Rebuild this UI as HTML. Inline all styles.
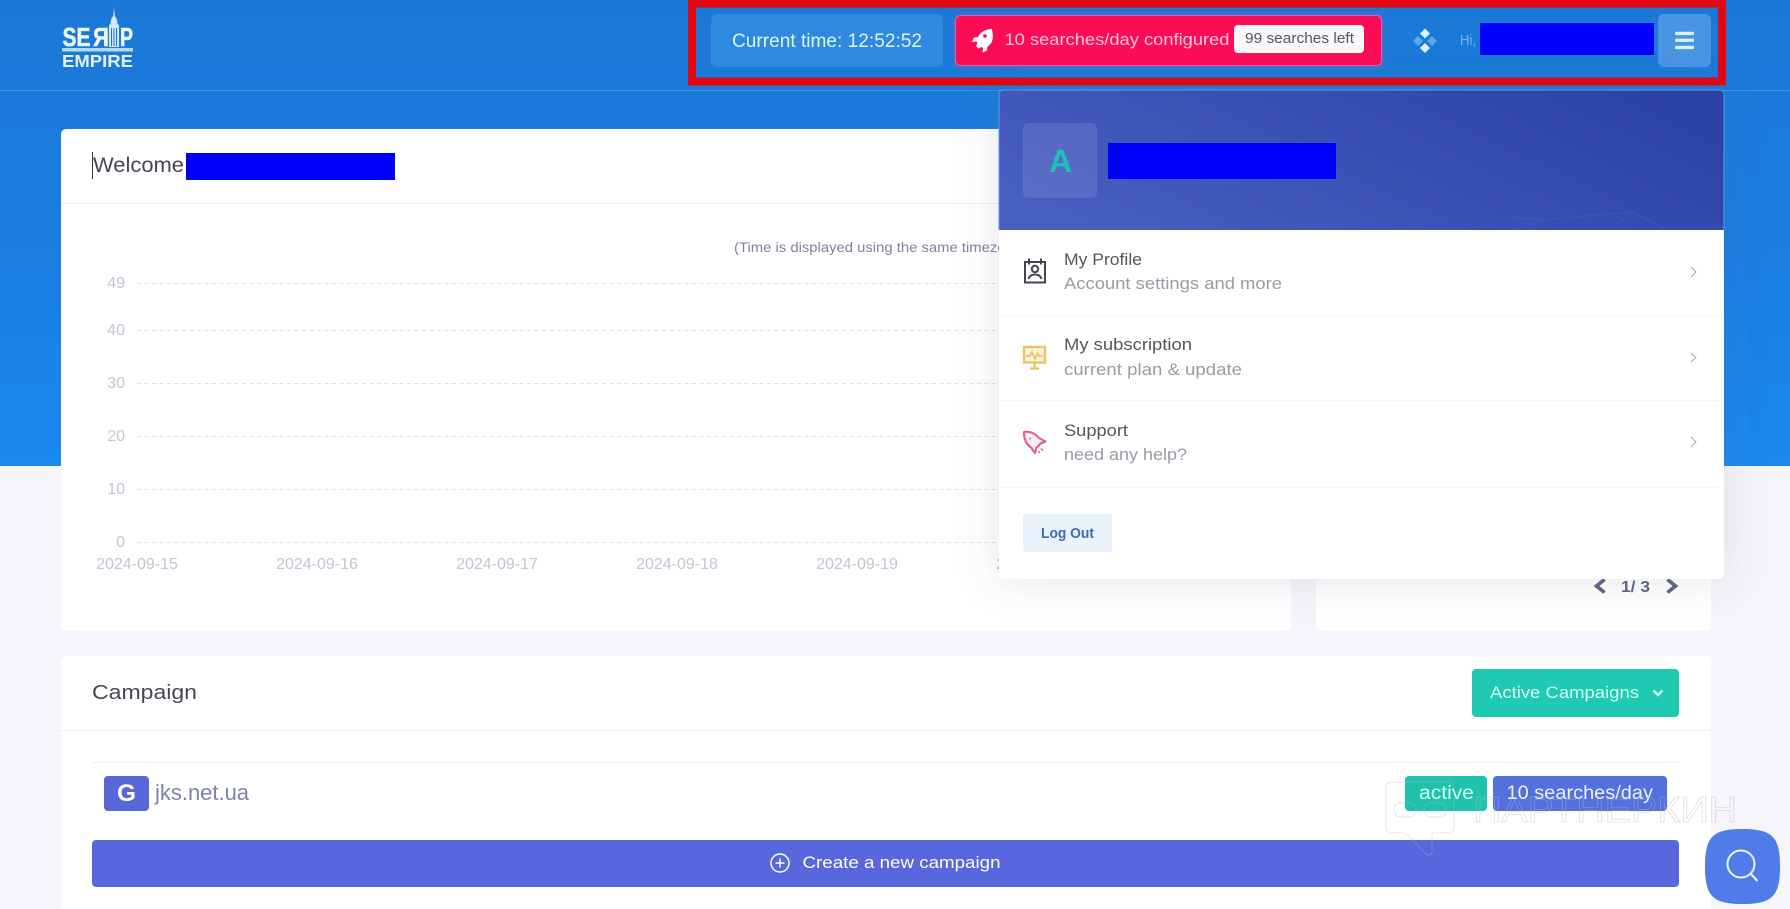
<!DOCTYPE html>
<html lang="en">
<head>
<meta charset="utf-8">
<title>SERP Empire</title>
<style>
html,body{margin:0;padding:0;width:1790px;height:909px;overflow:hidden;background:#f5f5fb}
svg{display:block;position:absolute;left:0;top:0}
text{font-family:"Liberation Sans",Arial,sans-serif}
</style>
</head>
<body>
<svg xmlns="http://www.w3.org/2000/svg" width="1790" height="909" viewBox="0 0 1790 909">
<defs>
<linearGradient id="hero" x1="0" y1="0" x2="0" y2="1">
<stop offset="0" stop-color="#1b78d6"/><stop offset=".5" stop-color="#1a7edf"/><stop offset="1" stop-color="#1a88f0"/>
</linearGradient>
<linearGradient id="head" x1="0" y1=".7" x2="1" y2=".3">
<stop offset="0" stop-color="#495ec1"/><stop offset="1" stop-color="#2d42a7"/>
</linearGradient>
<filter id="ddshadow" x="-10%" y="-10%" width="120%" height="125%">
<feDropShadow dx="0" dy="0" stdDeviation="22" flood-color="#52567a" flood-opacity=".16"/>
</filter>
<filter id="glow" x="-10%" y="-30%" width="120%" height="160%">
<feDropShadow dx="0" dy="0" stdDeviation="3" flood-color="#a05ad0" flood-opacity=".6"/>
</filter>
</defs>

<!-- backgrounds -->
<rect width="1790" height="909" fill="#f5f5fb"/>
<rect width="1790" height="466" fill="url(#hero)"/>
<rect x="0" y="90" width="1790" height="1" fill="#3f93e6"/>

<!-- logo -->
<path d="M114 7l.8 9 2 3 .7 5 1.500 1v22h-10V25l1.500-1 .7-5 2-3z" fill="#d4e5f5"/>
<g stroke="#1b78d6" stroke-width="1"><path d="M111.500 28v18M114 28v18M116.500 28v18"/></g>
<g fill="#eef7fd" stroke="#eef7fd" stroke-width=".5">
<text x="62.500" y="46" font-size="26" font-weight="bold" textLength="28" lengthAdjust="spacingAndGlyphs">SE</text>
<text x="93" y="46" font-size="26" font-weight="bold" textLength="16" lengthAdjust="spacingAndGlyphs">Я</text>
<text x="120" y="46" font-size="26" font-weight="bold" textLength="13" lengthAdjust="spacingAndGlyphs">P</text>
</g>
<rect x="62" y="48" width="71" height="3.500" fill="#b9d6f1"/>
<text x="62" y="67" font-size="17.500" font-weight="bold" fill="#e4f1fb" textLength="71" lengthAdjust="spacingAndGlyphs">EMPIRE</text>

<!-- red box -->
<rect x="692" y="3.500" width="1030" height="78" fill="none" stroke="#e30613" stroke-width="8"/>

<!-- time -->
<rect x="711" y="14" width="232" height="53" rx="6" fill="#2f89df"/>
<text x="732" y="47" font-size="19" fill="#dcf5fb" textLength="190" lengthAdjust="spacingAndGlyphs">Current time: 12:52:52</text>

<!-- pink -->
<rect x="955.500" y="15.500" width="426" height="50" rx="5" fill="#fb0a57" stroke="#e060a0" stroke-width="1" filter="url(#glow)"/>
<path d="M992 29c-6 0-11 2.500-14 8l-4 .5-2 4.500 4.500-.5 1 1.500-1.500 3 2.500 2.500 3-1.500 1.500 1-.5 4.500 4.500-2 .5-4c5-3 6.500-8.500 4.500-17z" fill="#fff"/>
<circle cx="985" cy="36" r="1.800" fill="#fb0a57"/>
<text x="1004.500" y="45" font-size="17" fill="#fcc4db" textLength="225" lengthAdjust="spacingAndGlyphs">10 searches/day configured</text>
<rect x="1234" y="25" width="130" height="28" rx="4" fill="#f9f9fb"/>
<text x="1245" y="43" font-size="14.500" fill="#565661" textLength="109" lengthAdjust="spacingAndGlyphs">99 searches left</text>

<!-- diamonds -->
<path d="M1425 28.500l5 5-5 5-5-5zM1425 43l5 5-5 5-5-5z" fill="#d9f2ff"/>
<path d="M1418 36l5 5-5 5-5-5zM1432 36l5 5-5 5-5-5z" fill="#5fa6ea"/>
<text x="1460" y="45" font-size="15" fill="#79b6f0" textLength="16" lengthAdjust="spacingAndGlyphs">Hi,</text>
<rect x="1480" y="23" width="174" height="32" fill="#0000ff"/>

<!-- menu btn -->
<rect x="1658" y="14" width="53" height="53" rx="6" fill="#4a95e3"/>
<g fill="#d4f3fb"><rect x="1675" y="31.800" width="19" height="3.300" rx="1"/><rect x="1675" y="38.600" width="19" height="3.300" rx="1"/><rect x="1675" y="45.800" width="19" height="3.300" rx="1"/></g>

<!-- welcome card -->
<rect x="61" y="129" width="1230" height="502" rx="5" fill="#fff"/>
<rect x="92" y="152" width="1" height="27" fill="#333"/>
<text x="93" y="172" font-size="21" fill="#464652" textLength="91" lengthAdjust="spacingAndGlyphs">Welcome</text>
<rect x="186" y="153" width="209" height="27" fill="#0000ff"/>
<rect x="61" y="203" width="1230" height="1" fill="#eeeef3"/>
<text x="734" y="252" font-size="13.500" fill="#7e8299" textLength="293" lengthAdjust="spacingAndGlyphs">(Time is displayed using the same timezone)</text>

<!-- chart -->
<g stroke="#dcdde6" stroke-width="1" stroke-dasharray="4 3.500">
<path d="M137 283.500H1260M137 330.500H1260M137 383.500H1260M137 436.500H1260M137 489.500H1260M137 542.500H1260"/>
</g>
<g font-size="16" fill="#c3c4d4" text-anchor="end">
<text x="125" y="288">49</text><text x="125" y="335">40</text><text x="125" y="388">30</text><text x="125" y="441">20</text><text x="125" y="494">10</text><text x="125" y="547">0</text>
</g>
<g font-size="16" fill="#c3c4d4" text-anchor="middle">
<text x="137" y="569">2024-09-15</text><text x="317" y="569">2024-09-16</text><text x="497" y="569">2024-09-17</text><text x="677" y="569">2024-09-18</text><text x="857" y="569">2024-09-19</text><text x="1037" y="569">2024-09-20</text>
</g>

<!-- side card -->
<rect x="1316" y="129" width="395" height="502" rx="5" fill="#fff"/>
<path d="M1604.500 579.500l-8 6.500 8 6.500" fill="none" stroke="#5c6486" stroke-width="3.600"/>
<path d="M1667.500 579.500l8 6.500-8 6.500" fill="none" stroke="#5c6486" stroke-width="3.600"/>
<text x="1621" y="592" font-size="16" font-weight="bold" fill="#5c6486" textLength="29" lengthAdjust="spacingAndGlyphs">1/ 3</text>

<!-- campaign card -->
<rect x="61" y="656" width="1650" height="260" rx="5" fill="#fff"/>
<text x="92" y="699" font-size="20.500" fill="#464652" textLength="105" lengthAdjust="spacingAndGlyphs">Campaign</text>
<rect x="61" y="730" width="1650" height="1" fill="#eeeef3"/>
<rect x="92" y="762" width="1588" height="1" fill="#eeeef3"/>
<rect x="1472" y="669" width="207" height="48" rx="4" fill="#1fc9b2"/>
<text x="1490" y="698" font-size="17" fill="#d6fff6" textLength="149" lengthAdjust="spacingAndGlyphs">Active Campaigns</text>
<path d="M1653.500 690.500l4.500 4.500 4.500-4.500" fill="none" stroke="#d6fff6" stroke-width="2.400"/>

<rect x="104" y="776" width="45" height="35" rx="4" fill="#5766d9"/>
<text x="117" y="801" font-size="24" font-weight="bold" fill="#fff" textLength="19" lengthAdjust="spacingAndGlyphs">G</text>
<text x="155" y="800" font-size="22.500" fill="#7f83ab" textLength="94" lengthAdjust="spacingAndGlyphs">jks.net.ua</text>

<rect x="1405" y="776" width="82" height="35" rx="4" fill="#1fc2ac"/>
<text x="1419" y="799" font-size="19" fill="#d6fff6" textLength="55" lengthAdjust="spacingAndGlyphs">active</text>
<rect x="1493" y="776" width="174" height="35" rx="4" fill="#5270de"/>
<text x="1506.500" y="799" font-size="19" fill="#eef2ff" textLength="146.500" lengthAdjust="spacingAndGlyphs">10 searches/day</text>

<rect x="92" y="840" width="1587" height="47" rx="4" fill="#5867dd"/>
<circle cx="780" cy="863" r="9" fill="none" stroke="#fff" stroke-width="1.500"/>
<path d="M780 858.500v9M775.500 863h9" stroke="#fff" stroke-width="1.500"/>
<text x="802.500" y="868" font-size="17" fill="#fff" textLength="198" lengthAdjust="spacingAndGlyphs">Create a new campaign</text>

<!-- dropdown -->
<rect x="999" y="90" width="725" height="489" rx="5" fill="#fff" filter="url(#ddshadow)"/>
<path d="M999 230V94a4 4 0 0 1 4-4h717a4 4 0 0 1 4 4v136z" fill="url(#head)"/>
<path d="M999 230V94a4 4 0 0 1 4-4h717a4 4 0 0 1 4 4v136" fill="none" stroke="#5b9be8" stroke-width="1"/>
<g stroke="#4d72cc" stroke-width="1" fill="none" opacity=".3">
<path d="M1515 230l25-10 92-8 35 18M1632 212l-22 18M1540 220l-30-3"/>
</g>
<rect x="1023" y="123" width="74" height="75" rx="5" fill="#fff" fill-opacity=".1"/>
<text x="1049" y="172" font-size="32" font-weight="bold" fill="#1bc0b8">A</text>
<rect x="1108" y="143" width="228" height="36" fill="#0000ff"/>

<!-- items -->
<text x="1064" y="265" font-size="16.500" fill="#55555f" textLength="78" lengthAdjust="spacingAndGlyphs">My Profile</text>
<text x="1064" y="289" font-size="16.500" fill="#9a9aa6" textLength="218" lengthAdjust="spacingAndGlyphs">Account settings and more</text>
<rect x="999" y="315" width="725" height="1" fill="#f6f6f9"/>
<text x="1064" y="350" font-size="16.500" fill="#55555f" textLength="128" lengthAdjust="spacingAndGlyphs">My subscription</text>
<text x="1064" y="375" font-size="16.500" fill="#9a9aa6" textLength="178" lengthAdjust="spacingAndGlyphs">current plan &amp; update</text>
<rect x="999" y="400" width="725" height="1" fill="#f6f6f9"/>
<text x="1064" y="436" font-size="16.500" fill="#55555f" textLength="64" lengthAdjust="spacingAndGlyphs">Support</text>
<text x="1064" y="460" font-size="16.500" fill="#9a9aa6" textLength="123" lengthAdjust="spacingAndGlyphs">need any help?</text>
<rect x="999" y="487" width="725" height="1" fill="#f6f6f9"/>

<g fill="none" stroke="#999aa3" stroke-width=".9">
<path d="M1691 267l5 5-5 5M1691 353l5 4.500-5 4.500M1691 437l5 5-5 5"/>
</g>

<!-- profile icon -->
<g fill="none" stroke="#45454f" stroke-width="2">
<rect x="1025" y="262" width="20" height="20.500"/>
<path d="M1029 258.500v6M1041 258.500v6"/>
<circle cx="1035" cy="269" r="3.200"/>
<path d="M1028.500 279c1-3.500 4-4.500 6.500-4.500s5.500 1 6.500 4.500"/>
</g>
<!-- monitor icon -->
<g fill="none" stroke="#e8c468" stroke-width="2.400">
<rect x="1024" y="347" width="21" height="15.500" fill="#fbf2d8"/>
<path d="M1026 356h4l2-4 3 7 2.500-6 1.500 3h4" stroke-width="1.800"/>
<path d="M1034.500 363v5M1030 368.500h9"/>
</g>
<!-- rocket icon -->
<g fill="#fdeef3" stroke="#d8608c" stroke-width="2.100" stroke-linejoin="round">
<path d="M1024 432c6-1 11.500 1.500 15 6l6.500 3.500-5 2c-1 1.500-2.500 3-4 4l-1.500 5.500-4-5.500c-4.500-3-7-8.500-7-15.500z"/>
<circle cx="1030" cy="438.500" r="1" fill="#d8608c" stroke="none"/>
<path d="M1041 448.500l2 2M1038.500 451l1 2" fill="none" stroke-width="1.500"/>
</g>

<!-- log out -->
<rect x="1023" y="514" width="89" height="38" rx="3" fill="#e9f1fc"/>
<text x="1041" y="538" font-size="14.500" font-weight="bold" fill="#3f6cae" textLength="53" lengthAdjust="spacingAndGlyphs">Log Out</text>

<!-- watermark -->
<g fill="none" stroke="#b9b9bf" stroke-width=".7" opacity=".5">
<path d="M1391 782h58a5 5 0 0 1 5 5v41a5 5 0 0 1-5 5h-17v18c0 5-4 5-7 2l-19-20h-15a5 5 0 0 1-5-5v-41a5 5 0 0 1 5-5z"/>
<rect x="1394" y="803" width="22" height="14" rx="6"/><rect x="1424" y="803" width="22" height="14" rx="6"/>
<text x="1473" y="822" font-size="36" textLength="264" lengthAdjust="spacingAndGlyphs">ПАРТНЕРКИН</text>
</g>

<!-- fab -->
<path d="M1742.500 829c30 0 37.500 8 37.500 37.500s-7.500 37.500-37.500 37.500-37.500-8-37.500-37.500 7.500-37.500 37.500-37.500z" fill="#4f7ce8"/>
<circle cx="1741" cy="864" r="13.500" fill="none" stroke="#eaf3ff" stroke-width="2"/>
<path d="M1750.500 873.500l7 7.500" stroke="#eaf3ff" stroke-width="2.200" fill="none"/>
</svg>
</body>
</html>
